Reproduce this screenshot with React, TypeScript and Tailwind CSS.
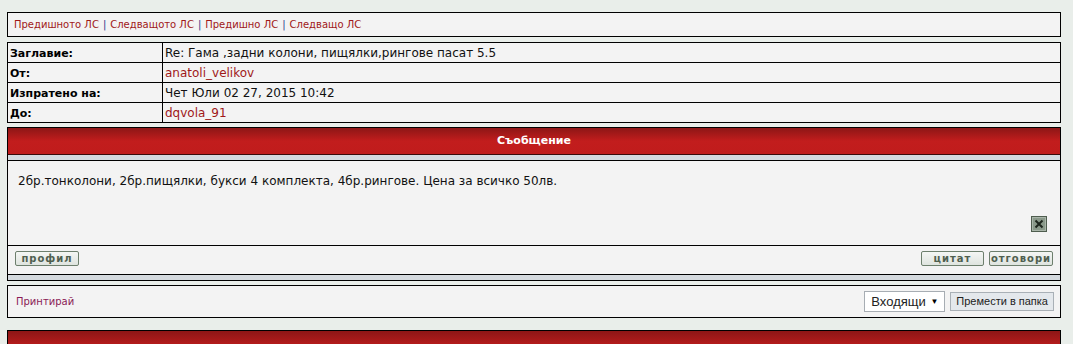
const VERDANA = "font-['DejaVu_Sans',Verdana,sans-serif]";

function NavLinks() {
  const links = ['Предишното ЛС', 'Следващото ЛС', 'Предишно ЛС', 'Следващо ЛС'];
  return (
    <div className="h-[25px] border border-black bg-[#f3f3f3] flex items-center pl-[6px] text-[10px] text-[#a01818]">
      {links.map((l, i) => (
        <span key={l} className="flex items-center">
          {i > 0 && <span className="px-[4px] text-[#2a3a8a]">|</span>}
          <a className="cursor-pointer">{l}</a>
        </span>
      ))}
    </div>
  );
}

function InfoTable() {
  const rows: { label: string; value: string; link?: boolean }[] = [
    { label: 'Заглавие:', value: 'Re: Гама ,задни колони, пищялки,рингове пасат 5.5' },
    { label: 'От:', value: 'anatoli_velikov', link: true },
    { label: 'Изпратено на:', value: 'Чет Юли 02 27, 2015 10:42' },
    { label: 'До:', value: 'dqvola_91', link: true },
  ];
  return (
    <div className="border-t border-l border-black bg-[#f3f3f3]">
      {rows.map((r) => (
        <div key={r.label} className="grid grid-cols-[155px_1fr] h-[20px] border-b border-black">
          <div className="border-r border-black flex items-center pl-[2px] pt-[2px] text-[11px] leading-[14px] font-bold text-black">
            {r.label}
          </div>
          <div
            className={`border-r border-black flex items-center pl-[2px] text-[12px] leading-[16px] ${
              r.link ? 'text-[#a01818]' : 'text-[#111]'
            }`}
          >
            {r.value}
          </div>
        </div>
      ))}
    </div>
  );
}

function SmallButton({ children, w }: { children: string; w: string }) {
  return (
    <button
      className={`${w} h-[15px] flex items-center justify-center rounded-[2px] border border-[#6d7f6d] bg-gradient-to-b from-[#f4f6f4] to-[#dfe4df] text-[10px] font-bold tracking-[1px] leading-none text-[#4f5f4f]`}
    >
      {children}
    </button>
  );
}

function CloseIcon() {
  return (
    <svg width="16" height="16" viewBox="0 0 16 16">
      <rect x="0.5" y="0.5" width="15" height="15" fill="#8a998a" stroke="#4f5d4f" />
      <rect x="1.5" y="1.5" width="13" height="13" fill="none" stroke="#a9b5a9" />
      <path d="M4.5 4.5 L11.5 11.5 M11.5 4.5 L4.5 11.5" stroke="#1e261e" strokeWidth="2" />
    </svg>
  );
}

function MessagePanel() {
  return (
    <div className="border border-black bg-[#f3f3f3]">
      <div className="h-[27px] bg-gradient-to-b from-[#8d1616] via-[#c21d1d] to-[#c01c1c] flex items-center justify-center text-[11px] font-bold text-white border-b border-[#3a0a0a]">
        Съобщение
      </div>
      <div className="h-[6px] bg-[#d4d9de] border-b border-black" />
      <div className="h-[84px] flex flex-col px-[10px] pt-[12px] pb-[13px]">
        <p className="text-[12px] text-[#111] leading-[16px]">
          2бр.тонколони, 2бр.пищялки, букси 4 комплекта, 4бр.рингове. Цена за всичко 50лв.
        </p>
        <div className="mt-auto flex justify-end pr-[3px]">
          <CloseIcon />
        </div>
      </div>
      <div className="h-[30px] border-t border-b border-black flex items-start justify-between pt-[5px] px-[7px]">
        <SmallButton w="w-[64px]">профил</SmallButton>
        <div className="flex gap-[5px]">
          <SmallButton w="w-[63px]">цитат</SmallButton>
          <SmallButton w="w-[64px]">отговори</SmallButton>
        </div>
      </div>
      <div className="h-[5px] bg-[#d4d9de]" />
    </div>
  );
}

function PrintBar() {
  return (
    <div className="h-[33px] border border-black bg-[#f3f3f3] flex items-center justify-between pl-[8px] pr-[6px]">
      <a className="text-[10px] text-[#8a1a55] cursor-pointer">Принтирай</a>
      <div className="flex items-center gap-[5px] font-['Liberation_Sans',Arial,sans-serif]">
        <div className="w-[81px] h-[21px] border border-[#a7adb3] bg-white flex items-center justify-between pl-[6px] pr-[6px] text-[13px] text-[#222]">
          <span>Входящи</span>
          <span className="text-[8px] text-black">▼</span>
        </div>
        <button className="h-[19px] px-[5px] border border-[#a9b0b6] bg-[#e4e8ec] text-[11px] text-[#222] leading-none">
          Премести в папка
        </button>
      </div>
    </div>
  );
}

export default function App() {
  return (
    <div className={`w-[1073px] h-[344px] overflow-hidden bg-[#e9eeea] ${VERDANA}`}>
      <div className="w-[1054px] ml-[7px] pt-[12px] flex flex-col">
        <NavLinks />
        <div className="h-[5px]" />
        <InfoTable />
        <div className="h-[4px]" />
        <MessagePanel />
        <div className="h-[4px]" />
        <PrintBar />
        <div className="h-[12px]" />
        <div className="h-[20px] border border-black bg-gradient-to-b from-[#8d1616] to-[#c21d1d]" />
      </div>
    </div>
  );
}
